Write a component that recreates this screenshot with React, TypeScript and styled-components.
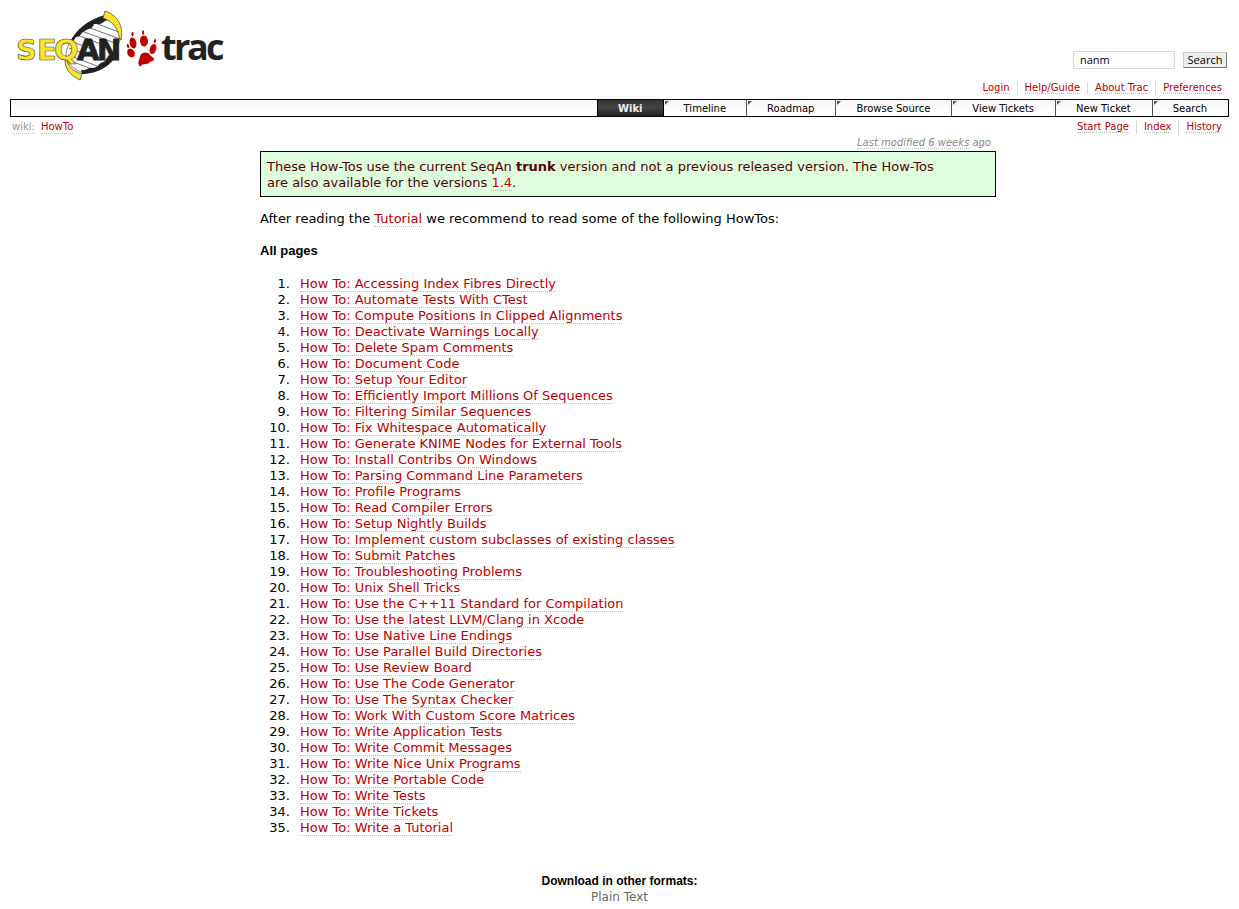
import React from "react";
import styled, { createGlobalStyle, css } from "styled-components";

const GlobalStyle = createGlobalStyle`
  body {
    margin: 10px;
    background: #fff;
    color: #000;
    font: 13px/16px Verdana, "DejaVu Sans", sans-serif;
  }
`;

const Link = styled.a<{ $muted?: boolean }>`
  color: ${(p) => (p.$muted ? "#999988" : "#bb0000")};
  text-decoration: none;
  border-bottom: 1px dotted #bbb;
`;

const Banner = styled.header`
  display: flex;
  justify-content: space-between;
  height: 70px;
`;

const LogoLink = styled.a`
  margin-left: 6px;
  svg {
    display: block;
  }
`;

const SearchForm = styled.form`
  display: flex;
  align-items: center;
  gap: 8px;
  height: 18px;
  margin: 41px 2px 0 0;
`;

const SearchBox = styled.input`
  box-sizing: border-box;
  width: 102px;
  height: 18px;
  padding: 0 6px 1px;
  border: 1px solid #d7d7d7;
  background: #fff;
  color: #000;
  font: 11px "Open Sans", sans-serif;
`;

const SearchButton = styled.button`
  box-sizing: border-box;
  width: 44px;
  height: 16px;
  padding: 0;
  border: 1px solid #ccc;
  border-right-color: #777;
  border-bottom-color: #777;
  background: #eee;
  color: #000;
  font: 11px/12px "Open Sans", sans-serif;
`;

const LinkList = styled.ul`
  display: flex;
  justify-content: flex-end;
  margin: 0;
  padding: 0;
  list-style: none;
  font-size: 10px;
  line-height: 12px;
`;

const LinkItem = styled.li`
  padding: 0 7px;
  & + & {
    border-left: 1px solid #d7d7d7;
  }
`;

const MetaNav = styled.nav`
  padding: 2px 0 5px;
`;

const MainNav = styled.nav`
  border: 1px solid #000;
  background: linear-gradient(#f7f7f7, #fff);
`;

const Tabs = styled.ul`
  display: flex;
  justify-content: flex-end;
  margin: 0;
  padding: 0;
  list-style: none;
  font-size: 10px;
  line-height: 14px;
`;

const Tab = styled.li<{ $active?: boolean }>`
  position: relative;
  border-left: 1px solid #555;
  a {
    display: block;
    padding: 2px 20px 0;
    color: #000;
    text-decoration: none;
  }
  & + & a {
    padding: 2px 21px 0 20px;
  }
  ${(p) =>
    p.$active
      ? css`
          border-left-color: #000;
          border-right: 1px solid #000;
          background: linear-gradient(#333, #444 45%, #222);
          font-weight: bold;
          && a {
            color: #eee;
          }
          & + li {
            border-left: 0;
          }
        `
      : css`
          &::before {
            content: "";
            position: absolute;
            top: 1px;
            left: 1px;
            border-top: 4px solid #555;
            border-right: 4px solid transparent;
          }
        `}
`;

const ContextBar = styled.nav`
  display: flex;
  justify-content: space-between;
  padding-top: 4px;
  font-size: 10px;
  line-height: 12px;
`;

const Path = styled.div`
  display: flex;
  gap: 6px;
  padding-left: 2px;
`;

const Content = styled.main`
  margin: 2px 233px 0 250px;
`;

const Modified = styled.p`
  margin: 0 5px 2px;
  color: #888;
  text-align: right;
  font-size: 10px;
  line-height: 13px;
  font-style: italic;
  a {
    color: inherit;
  }
`;

const Notice = styled.div`
  padding: 7px 40px 5px 6px;
  border: 1px solid #000;
  background: #ddffdd;
  color: #550000;
`;

const Intro = styled.p`
  margin: 14px 0 16px;
`;

const Heading = styled.h2`
  margin: 0;
  font: bold 13px/16px Arial, "Liberation Sans", sans-serif;
`;

const Pages = styled.ol`
  margin: 17px 0 0;
  padding: 0;
  list-style: none;
  counter-reset: page;
`;

const PageItem = styled.li`
  display: flex;
  height: 16px;
  counter-increment: page;
  &::before {
    content: counter(page) ".";
    width: 30px;
    margin-right: 10px;
    text-align: right;
  }
`;

const Footer = styled.footer`
  margin-top: 37px;
  text-align: center;
  font-size: 12px;
  h3 {
    margin: 0;
    font: bold 12px/16px Arial, "Liberation Sans", sans-serif;
  }
  a {
    color: #666;
    text-decoration: none;
  }
`;

const tabs = ["Wiki", "Timeline", "Roadmap", "Browse Source", "View Tickets", "New Ticket", "Search"];

const howTos = [
  "Accessing Index Fibres Directly",
  "Automate Tests With CTest",
  "Compute Positions In Clipped Alignments",
  "Deactivate Warnings Locally",
  "Delete Spam Comments",
  "Document Code",
  "Setup Your Editor",
  "Efficiently Import Millions Of Sequences",
  "Filtering Similar Sequences",
  "Fix Whitespace Automatically",
  "Generate KNIME Nodes for External Tools",
  "Install Contribs On Windows",
  "Parsing Command Line Parameters",
  "Profile Programs",
  "Read Compiler Errors",
  "Setup Nightly Builds",
  "Implement custom subclasses of existing classes",
  "Submit Patches",
  "Troubleshooting Problems",
  "Unix Shell Tricks",
  "Use the C++11 Standard for Compilation",
  "Use the latest LLVM/Clang in Xcode",
  "Use Native Line Endings",
  "Use Parallel Build Directories",
  "Use Review Board",
  "Use The Code Generator",
  "Use The Syntax Checker",
  "Work With Custom Score Matrices",
  "Write Application Tests",
  "Write Commit Messages",
  "Write Nice Unix Programs",
  "Write Portable Code",
  "Write Tests",
  "Write Tickets",
  "Write a Tutorial",
];

function Logo() {
  return (
    <svg width="210" height="72" viewBox="16 10 210 72" role="img" aria-label="SeqAn trac">
      <path d="M66 56C66 47 70 42 75 35C82 26 94 20 106 17C115 22 120 30 120 39C118 48 114 53 109 58C102 67 92 72 83 73C73 69 67 63 66 56Z" fill="#fff" stroke="#555" strokeWidth=".7" />
      <path
        d="M95 23l24 9M90 28l30 11M84 32l34 12M77 35l32 12M73 42l24 9M69 48l26 10M68 55l29 11M71 61l18 7"
        stroke="#333"
        strokeWidth=".7"
        fill="none"
      />
      <path d="M70 42C76 30 87 20 105 15L109 20C104 20 103 24 99 24L94 24C92 30 88 28 85 31C79 34 81 37 76 37L72 43Z" fill="#222" />
      <path d="M81 70C87 71 88 67 93 68C99 67 99 62 104 62L109 55L119 51C113 65 98 74 82 74Z" fill="#222" />
      <path d="M105 11C117 15 124 25 121 40L119 37C118 28 112 21 103 18Z" fill="#fde428" stroke="#444" strokeWidth=".7" />
      <path d="M66 58C68 67 73 71 82 74L80 80C71 76 64 69 65 57Z" fill="#fde428" stroke="#444" strokeWidth=".7" />
      <g fontFamily="'DejaVu Sans', sans-serif" fontWeight="bold" fontSize="29">
        <text x="16 37 54" y="60" fill="#fde428" stroke="#444" strokeWidth=".6">
          SEQ
        </text>
        <text x="77 97" y="60" fill="#222" stroke="#222" strokeWidth=".8">
          AN
        </text>
      </g>
      <g fill="#c00000">
        <path d="M139 65C137 62 140 59 140 56C142 51 149 52 150 55C151 57 155 57 154 60C152 62 150 61 149 63C146 65 143 63 141 66C140 67 139 66 139 65Z" />
        <ellipse cx="133" cy="43" rx="3.4" ry="5.6" transform="rotate(-12 133 43)" />
        <ellipse cx="144" cy="41" rx="4" ry="5.6" transform="rotate(-4 144 41)" />
        <ellipse cx="131" cy="53" rx="3.6" ry="4.6" transform="rotate(-30 131 53)" />
        <ellipse cx="153" cy="49" rx="3.2" ry="5.2" transform="rotate(18 153 49)" />
        <ellipse cx="132.5" cy="34" rx="1.1" ry="2.2" />
        <ellipse cx="143" cy="32.5" rx="1.1" ry="2.3" />
        <ellipse cx="128" cy="46" rx="1.1" ry="2" transform="rotate(-20 128 46)" />
        <ellipse cx="155" cy="41" rx="1.1" ry="2" transform="rotate(15 155 41)" />
      </g>
      <text x="161 174 187 206" y="60" fill="#222" fontFamily="'Open Sans', sans-serif" fontWeight="bold" fontSize="36">
        trac
      </text>
    </svg>
  );
}

function Links({ items }: { items: string[] }) {
  return (
    <LinkList>
      {items.map((item) => (
        <LinkItem key={item}>
          <Link href="#">{item}</Link>
        </LinkItem>
      ))}
    </LinkList>
  );
}

export default function App() {
  return (
    <>
      <GlobalStyle />
      <Banner>
        <LogoLink href="#">
          <Logo />
        </LogoLink>
        <SearchForm role="search">
          <SearchBox type="text" aria-label="Search" defaultValue="nanm" />
          <SearchButton type="button">Search</SearchButton>
        </SearchForm>
      </Banner>
      <MetaNav>
        <Links items={["Login", "Help/Guide", "About Trac", "Preferences"]} />
      </MetaNav>
      <MainNav>
        <Tabs>
          {tabs.map((tab) => (
            <Tab key={tab} $active={tab === "Wiki"}>
              <a href="#">{tab}</a>
            </Tab>
          ))}
        </Tabs>
      </MainNav>
      <ContextBar>
        <Path>
          <Link href="#" $muted>
            wiki:
          </Link>
          <Link href="#">HowTo</Link>
        </Path>
        <Links items={["Start Page", "Index", "History"]} />
      </ContextBar>
      <Content>
        <Modified>
          <Link href="#">Last modified</Link> <Link href="#">6 weeks</Link> ago
        </Modified>
        <Notice>
          These How-Tos use the current SeqAn <strong>trunk</strong> version and not a previous released version. The
          How-Tos are also available for the versions <Link href="#">1.4</Link>.
        </Notice>
        <Intro>
          After reading the <Link href="#">Tutorial</Link> we recommend to read some of the following HowTos:
        </Intro>
        <Heading>All pages</Heading>
        <Pages>
          {howTos.map((title) => (
            <PageItem key={title}>
              <Link href="#">How To: {title}</Link>
            </PageItem>
          ))}
        </Pages>
      </Content>
      <Footer>
        <h3>Download in other formats:</h3>
        <a href="#">Plain Text</a>
      </Footer>
    </>
  );
}
